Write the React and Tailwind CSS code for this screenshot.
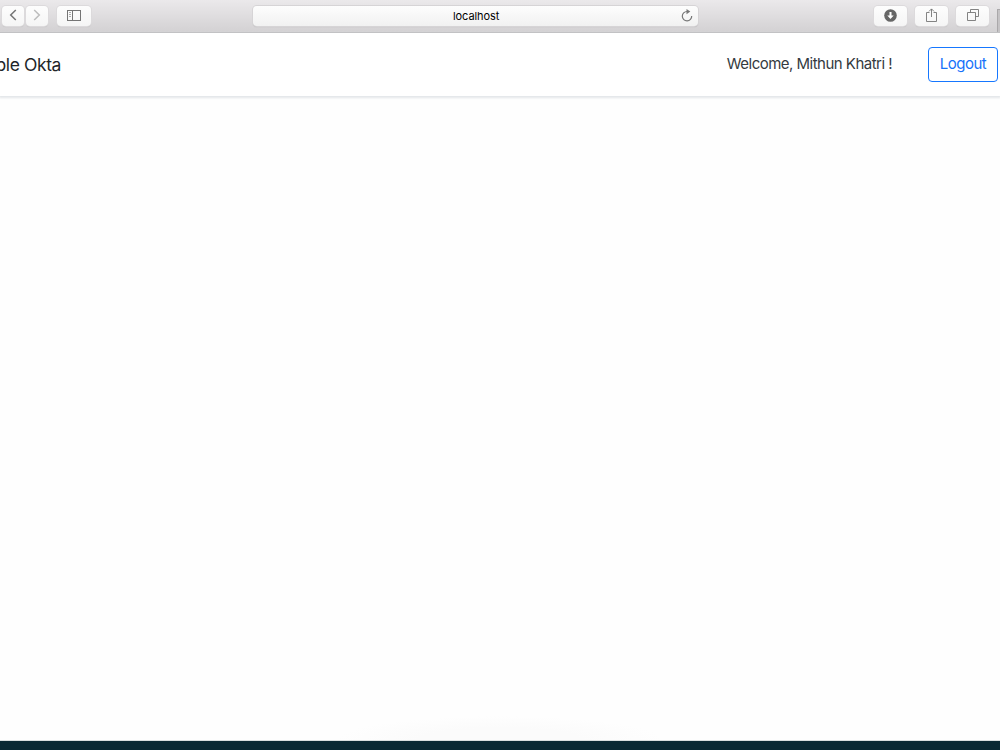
import React from "react";

const ToolbarButton = ({ label, className, children }) => (
  <button
    type="button"
    aria-label={label}
    className={`flex h-5 items-center justify-center rounded-[4px] bg-linear-to-b from-[#fdfdfd] to-[#f5f5f5] pb-px text-[#757575] shadow-[0_0_0_1px_#dcdadc,0_1px_1px_#b8b6b8] ${className}`}
  >
    {children}
  </button>
);

const BackIcon = ({ className }) => (
  <svg width="8" height="12" viewBox="0 0 8 12" fill="none" className={className}>
    <path d="M6.8 1 1.7 6l5.1 5" stroke="currentColor" strokeWidth="1.5" />
  </svg>
);

const SidebarIcon = () => (
  <svg width="14" height="11" viewBox="0 0 14 11" fill="none">
    <rect x="0.5" y="0.5" width="13" height="10" stroke="currentColor" />
    <path d="M5.5 1v9" stroke="currentColor" />
    <path d="M2 2.5h2M2 4.5h2M2 6.5h2" stroke="currentColor" strokeOpacity="0.6" />
  </svg>
);

const ReloadIcon = () => (
  <svg width="12" height="13" viewBox="0 0 12 13" fill="none">
    <path d="M6 2.5A4.7 4.7 0 1 0 10.7 7" stroke="#777" strokeWidth="1.2" />
    <path d="M5.5 0 9.3 2.6 5.5 5.2z" fill="#777" />
  </svg>
);

const DownloadIcon = () => (
  <svg width="13" height="13" viewBox="0 0 13 13">
    <circle cx="6.5" cy="6.5" r="6.3" fill="#666" />
    <path d="M5.5 3h2v3.4h2.2L6.5 10 3.3 6.4h2.2z" fill="#fff" />
  </svg>
);

const ShareIcon = () => (
  <svg width="11" height="14" viewBox="0 0 11 14" fill="none" stroke="currentColor">
    <path d="M3.5 4.5h-3v9h10v-9h-3M5.5 9V1M3 3.4 5.5.9 8 3.4" strokeWidth="0.9" />
  </svg>
);

const TabsIcon = () => (
  <svg width="12" height="12" viewBox="0 0 12 12" fill="none" stroke="currentColor">
    <path d="M3.5 3.5v-3h8v7h-3M.5 3.5h8v8h-8z" strokeWidth="0.9" />
  </svg>
);

const BrowserToolbar = () => (
  <div className="flex h-[33px] shrink-0 items-start border-b border-[#b3b1b3] bg-linear-to-b from-[#ebe9eb] to-[#d3d1d3] pt-[5.5px] pl-[2px]">
    <ToolbarButton label="Back" className="w-[22px]">
      <BackIcon />
    </ToolbarButton>
    <ToolbarButton label="Forward" className="ml-[2px] w-[22px]">
      <BackIcon className="rotate-180 text-[#bcbcbc]" />
    </ToolbarButton>
    <ToolbarButton label="Sidebar" className="ml-[9px] w-[34px]">
      <SidebarIcon />
    </ToolbarButton>

    <div className="ml-[162px] flex h-5 w-[445px] items-center rounded-[4px] bg-linear-to-b from-[#fdfdfd] to-[#f1f1f1] pr-[5px] pl-[200px] shadow-[0_0_0_1px_#d6d4d6,0_1px_1px_#aaa8aa]">
      <span className="text-[11px] leading-5 tracking-[-0.08px] text-black">localhost</span>
      <span className="mb-px ml-auto">
        <ReloadIcon />
      </span>
    </div>

    <ToolbarButton label="Downloads" className="ml-[176px] w-[33px]">
      <DownloadIcon />
    </ToolbarButton>
    <ToolbarButton label="Share" className="ml-2 w-[33px]">
      <ShareIcon />
    </ToolbarButton>
    <ToolbarButton label="Show tabs" className="ml-2 w-[33px]">
      <TabsIcon />
    </ToolbarButton>
    <div className="mt-[3px] ml-auto h-[23px] w-[3px] border-t border-l border-[#aaa8aa] bg-[#c5c3c5]" />
  </div>
);

const Navbar = () => (
  <nav className="flex h-[63px] shrink-0 items-center bg-white pr-[2px] shadow-[0_1px_2px_1px_#e4e7ea]">
    <div className="flex w-[61px] justify-end overflow-hidden text-[17.5px] leading-7 tracking-[-0.4px] whitespace-nowrap text-[#212529]">
      ple Okta
    </div>
    <span className="ml-auto text-[15px] tracking-[-0.52px] whitespace-nowrap text-[#343a40]">
      Welcome, Mithun Khatri !
    </span>
    <button
      type="button"
      className="ml-9 flex h-[35px] w-[70px] items-center justify-center rounded-[4px] border border-[#1677ff] text-[15px] tracking-[-0.5px] text-[#1672fa]"
    >
      Logout
    </button>
  </nav>
);

const App = () => (
  <div className="flex h-[750px] w-[1000px] flex-col overflow-hidden bg-[#fefefe] font-['Inter',sans-serif]">
    <BrowserToolbar />
    <Navbar />
    <main className="flex flex-1 items-end justify-center overflow-hidden">
      <div className="h-6 w-[330px] bg-[radial-gradient(ellipse_at_bottom,#fbfbfb_35%,#fefefe_70%)]" />
    </main>
    <footer className="h-[10px] shrink-0 border-t border-[#d9dddf] bg-[#0a2834]" />
  </div>
);

export default App;
